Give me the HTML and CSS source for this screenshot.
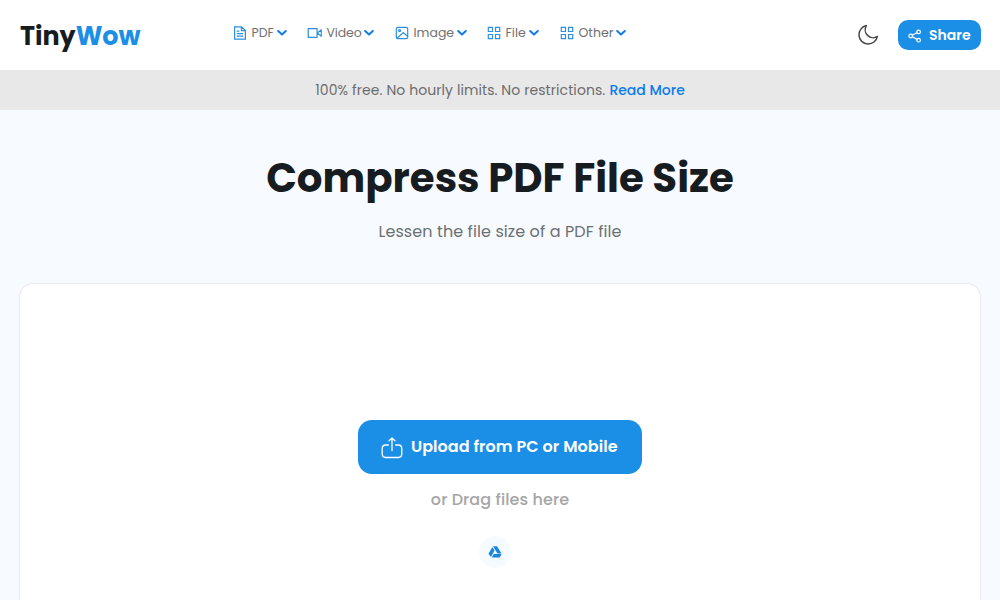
FILE: index.html
```
<!DOCTYPE html>
<html lang="en">
<head>
<meta charset="utf-8">
<title>Compress PDF File Size - TinyWow</title>
<link rel="stylesheet" href="styles.css">
</head>
<body>
<header class="header">
  <a class="logo"><span class="logo-tiny">Tiny</span><span class="logo-wow">Wow</span></a>
  <nav class="nav">
    <a class="nav-item nav-pdf"><svg class="icon" viewBox="0 0 14 14"><path d="M1.6.8h7L12.4 4.5v8.7H1.6zM8.4.8v3.8h4M4.2 5.2h1.6M4.2 7.7h5.6M4.2 10.2h5.6"/></svg><span class="label">PDF</span><svg class="chev" viewBox="0 0 10 6"><path d="M1.2 1l3.8 3.6L8.8 1"/></svg></a>
    <a class="nav-item nav-video"><svg class="icon icon-video" viewBox="0 0 16 14"><path d="M1.2 2.6h8.9v8.8H1.2zM10.3 7l4-3.2v6.4z"/></svg><span class="label">Video</span><svg class="chev" viewBox="0 0 10 6"><path d="M1.2 1l3.8 3.6L8.8 1"/></svg></a>
    <a class="nav-item nav-image"><svg class="icon" viewBox="0 0 14 14"><rect x="1.3" y="1.3" width="11.4" height="11.4" rx="1.6"/><circle cx="4.6" cy="4.6" r="1"/><path d="M2 12.2l6.3-5.7 4.2 3.7"/></svg><span class="label">Image</span><svg class="chev" viewBox="0 0 10 6"><path d="M1.2 1l3.8 3.6L8.8 1"/></svg></a>
    <a class="nav-item nav-file"><svg class="icon" viewBox="0 0 14 14"><path d="M1.3 1.3h4.2v4.2H1.3zM8.5 1.3h4.2v4.2H8.5zM1.3 8.5h4.2v4.2H1.3zM8.5 8.5h4.2v4.2H8.5z"/></svg><span class="label">File</span><svg class="chev" viewBox="0 0 10 6"><path d="M1.2 1l3.8 3.6L8.8 1"/></svg></a>
    <a class="nav-item nav-other"><svg class="icon" viewBox="0 0 14 14"><path d="M1.3 1.3h4.2v4.2H1.3zM8.5 1.3h4.2v4.2H8.5zM1.3 8.5h4.2v4.2H1.3zM8.5 8.5h4.2v4.2H8.5z"/></svg><span class="label">Other</span><svg class="chev" viewBox="0 0 10 6"><path d="M1.2 1l3.8 3.6L8.8 1"/></svg></a>
  </nav>
  <div class="actions">
    <svg class="moon" viewBox="0 0 22 22"><path d="M9.4 1.6A9.3 9.3 0 1 0 20.4 12.4A7.9 7.9 0 0 1 9.4 1.6z"/></svg>
    <a class="share"><svg class="share-icon" viewBox="0 0 14 14"><path d="M4.3 6.2l4.6-2.5M4.3 7.8l4.8 2.6"/><circle cx="2.7" cy="7" r="1.8"/><circle cx="10.6" cy="2.9" r="1.8"/><circle cx="10.6" cy="11.2" r="1.8"/></svg><span class="share-label">Share</span></a>
  </div>
</header>
<div class="notice"><span class="notice-text">100% free. No hourly limits. No restrictions.</span><a class="notice-link">Read More</a></div>
<main class="main">
  <h1 class="title">Compress PDF File Size</h1>
  <p class="subtitle">Lessen the file size of a PDF file</p>
  <section class="card">
    <a class="upload"><svg class="upload-icon" viewBox="0 0 22 22"><path d="M7.4 8H4.8C2.5 8 1.2 9.4 1.2 11.6v5.2c0 2.3 1.3 3.7 3.6 3.7h12.4c2.3 0 3.6-1.4 3.6-3.7v-5.2C20.8 9.4 19.5 8 17.2 8h-2.6M11 13.6V1M8 3.7L11 .9l3 2.8"/></svg><span class="upload-label">Upload from PC or Mobile</span></a>
    <p class="drag">or Drag files here</p>
    <a class="drive"><svg class="drive-icon" viewBox="0 0 14 12"><path d="M5 .3h4l4.5 7.1H9.4zM4.4 1.1l2.1 3.4-3.6 6.6L.5 7.7zM5.7 8.1h7.9l-1.9 3.5H3.8z"/></svg></a>
  </section>
</main>
</body>
</html>
```
FILE: styles.css
```
* { box-sizing: border-box; }
body {
  display: flex;
  flex-direction: column;
  margin: 0;
  height: 600px;
  overflow: hidden;
  background: #f7fbff;
  color: #6c7073;
  font-family: Poppins, Inter, sans-serif;
}
svg { display: block; flex: none; fill: none; stroke-linecap: round; stroke-linejoin: round; }
span, a, p { white-space: nowrap; }
.header { display: flex; flex: none; height: 70px; padding: 0 19px 0 20px; background: #fff; }
.logo { width: 212.5px; padding-top: 21px; font-size: 25.4px; line-height: 30px; font-weight: 700; }
.logo-tiny { color: #161c1f; }
.logo-wow { color: #1b8ee6; }
.nav { display: flex; height: 20px; margin-top: 23px; }
.nav-item { display: flex; align-items: center; color: #707070; font-size: 12.5px; line-height: 20px; }
.nav-pdf { width: 74px; }
.nav-video { width: 88px; }
.nav-image { width: 92px; }
.nav-file { width: 73px; }
.nav-other { width: 70px; }
.icon { width: 14px; height: 14px; margin-right: 5px; stroke: #2d8fe3; stroke-width: 1.2; stroke-linejoin: miter; }
.icon-video { width: 16px; margin-right: 4px; stroke-linejoin: round; }
.chev { width: 10px; height: 6px; margin-left: 3px; stroke: #167be8; stroke-width: 2; }
.nav-video .label { letter-spacing: -0.15px; }
.nav-image .chev, .nav-other .chev { margin-left: 2.5px; }
.nav-file .chev { margin-left: 3.5px; }
.actions { display: flex; align-items: center; margin-left: auto; gap: 19px; }
.moon { width: 22px; height: 22px; stroke: #4a4a4a; stroke-width: 1.5; }
.share { display: flex; align-items: center; width: 83px; height: 30px; padding-left: 10px; border-radius: 10px; background: #1b8ee6; color: #fff; font-size: 14px; font-weight: 600; }
.share-icon { width: 14px; height: 14px; margin: 2px 7px 0 0; stroke: #fff; stroke-width: 1.2; }
.notice { display: flex; flex: none; justify-content: center; gap: 4px; height: 40px; background: #e8e8e8; font-size: 14px; line-height: 40px; }
.notice-text { color: #6c6c6c; letter-spacing: 0.08px; }
.notice-link { color: #0b7bea; font-weight: 500; }
.main { display: flex; flex: 1; flex-direction: column; padding: 38px 19px 0; }
.title { margin: 0; color: #161c1f; font-size: 40.3px; line-height: 60px; font-weight: 700; text-align: center; }
.subtitle { margin: 12px 0 0; text-align: center; font-size: 16px; line-height: 24px; letter-spacing: 0.09px; }
.card { display: flex; flex: 1; flex-direction: column; align-items: center; margin-top: 39px; padding-top: 136px; background: #fff; border: 1px solid #e7ebee; border-bottom: 0; border-radius: 14px 14px 0 0; }
.upload { display: flex; align-items: center; width: 284px; height: 54px; padding-left: 23px; border-radius: 14px; background: #1b8ee6; color: #fff; font-size: 16px; font-weight: 600; }
.upload-icon { width: 22px; height: 22px; margin: 2px 8px 0 0; stroke: #fff; stroke-width: 1.3; }
.upload-label { padding-bottom: 2px; letter-spacing: 0.05px; }
.drag { margin: 14px 0 0; color: #a5a5a5; font-size: 16px; line-height: 24px; font-weight: 500; letter-spacing: 0.1px; }
.drive { display: flex; align-items: center; justify-content: center; width: 32px; height: 32px; margin: 24px 11px 0 0; border-radius: 50%; background: #f5fbff; }
.drive-icon { width: 14px; height: 12px; fill: #1b85de; }
```
